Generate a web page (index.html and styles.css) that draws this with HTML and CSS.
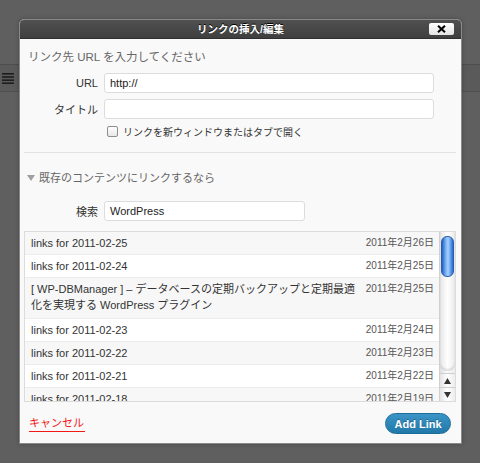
FILE: index.html
```html
<!DOCTYPE html>
<html lang="ja">
<head>
<meta charset="utf-8">
<title>リンクの挿入/編集</title>
<link rel="stylesheet" href="styles.css">
</head>
<body>
<div class="editor">
  <div class="toolbar">
    <svg class="tb-icon" width="12" height="11" viewBox="0 0 12 11"><g fill="#1e1e1e"><rect x="0" y="0" width="12" height="1.6"/><rect x="0" y="3.2" width="12" height="1.6"/><rect x="0" y="6.4" width="12" height="1.6"/><rect x="0" y="9.4" width="12" height="1.6"/></g></svg>
  </div>
</div>

<div class="dialog">
  <div class="titlebar">
    <span></span>
    <span class="title">リンクの挿入/編集</span>
    <span class="close-wrap"><button class="close" type="button"><svg width="9" height="8" viewBox="0 0 9 8"><path d="M1 0.8 L8 7.2 M8 0.8 L1 7.2" stroke="#000" stroke-width="2.1"/></svg></button></span>
  </div>
  <div class="body">
    <div class="options">
      <p class="heading">リンク先 URL を入力してください</p>
      <div class="field">
        <label class="label">URL</label>
        <div class="input url">http://</div>
      </div>
      <div class="field">
        <label class="label">タイトル</label>
        <div class="input url"></div>
      </div>
      <div class="check-row">
        <span class="checkbox"></span>
        <span class="check-text">リンクを新ウィンドウまたはタブで開く</span>
      </div>
    </div>
    <div class="sep"></div>
    <div class="internal">
      <p class="toggle"><svg class="tri" width="8" height="6" viewBox="0 0 8 6"><path d="M0 0 H8 L4 6 Z" fill="#a0a0a0"/></svg>既存のコンテンツにリンクするなら</p>
      <div class="field search-field">
        <label class="label">検索</label>
        <div class="input search">WordPress</div>
      </div>
    </div>
    <div class="results">
      <ul class="list">
        <li class="row alt"><span class="item-title">links for 2011-02-25</span><span class="item-date">2011年2月26日</span></li>
        <li class="row"><span class="item-title">links for 2011-02-24</span><span class="item-date">2011年2月25日</span></li>
        <li class="row alt wrap"><span class="item-title">[ WP-DBManager ] – データベースの定期バックアップと定期最適化を実現する WordPress プラグイン</span><span class="item-date">2011年2月25日</span></li>
        <li class="row"><span class="item-title">links for 2011-02-23</span><span class="item-date">2011年2月24日</span></li>
        <li class="row alt"><span class="item-title">links for 2011-02-22</span><span class="item-date">2011年2月23日</span></li>
        <li class="row"><span class="item-title">links for 2011-02-21</span><span class="item-date">2011年2月22日</span></li>
        <li class="row alt"><span class="item-title">links for 2011-02-18</span><span class="item-date">2011年2月19日</span></li>
      </ul>
      <div class="scrollbar">
        <div class="track"><div class="thumb"></div></div>
        <div class="arrow up"><svg width="7" height="6" viewBox="0 0 7 6"><path d="M3.5 0 L7 6 H0 Z" fill="#333"/></svg></div>
        <div class="arrow down"><svg width="7" height="6" viewBox="0 0 7 6"><path d="M0 0 H7 L3.5 6 Z" fill="#333"/></svg></div>
      </div>
    </div>
    <div class="footer">
      <a class="cancel">キャンセル</a>
      <button class="submit" type="button">Add Link</button>
    </div>
  </div>
</div>
</body>
</html>
```
FILE: styles.css
```css
html, body {
  margin: 0;
  padding: 0;
}
body {
  width: 480px;
  height: 463px;
  overflow: hidden;
  background: #5f5f5f;
  font-family: "Liberation Sans", "Noto Sans CJK JP", sans-serif;
  font-size: 11px;
  color: #333;
}
.editor {
  padding-top: 64px;
}
.toolbar {
  height: 26px;
  background: #5a5a5a;
  border-top: 1px solid #4d4d4d;
  border-bottom: 1px solid #505050;
  display: flex;
  align-items: center;
  padding-left: 2px;
}
.tb-icon {
  display: block;
}
.dialog {
  position: absolute;
  left: 19px;
  top: 19px;
  width: 441px;
  height: 423px;
  border: 1px solid #8a8a8a;
  border-radius: 5px 5px 0 0;
  background: #f9f9f9;
  box-shadow: 0 0 4px rgba(0, 0, 0, 0.25);
  overflow: hidden;
  display: flex;
  flex-direction: column;
}
.titlebar {
  height: 18px;
  flex: none;
  background: linear-gradient(#505050, #3f3f3f);
  border-bottom: 1px solid #2f2f2f;
  display: grid;
  grid-template-columns: 1fr auto 1fr;
  align-items: center;
}
.title {
  color: #fff;
  font-weight: bold;
  font-size: 10.5px;
  text-shadow: 0 -1px 0 #000;
  line-height: 18px;
}
.close-wrap {
  display: flex;
  justify-content: flex-end;
  padding-right: 7px;
}
.close {
  width: 25px;
  height: 12px;
  padding: 0;
  border: 0;
  border-radius: 2px;
  background: linear-gradient(#ffffff, #e4e4e4);
  display: flex;
  align-items: center;
  justify-content: center;
}
.close svg {
  display: block;
}
.body {
  flex: 1;
  display: flex;
  flex-direction: column;
}
.options {
  padding: 10px 0 0 8px;
}
.heading {
  margin: 0 0 8px;
  font-size: 11.5px;
  line-height: 16px;
  color: #666;
}
.field {
  display: flex;
  align-items: center;
  gap: 6px;
  margin-bottom: 6px;
}
.label {
  width: 70px;
  text-align: right;
  font-size: 11px;
  color: #333;
}
.input {
  height: 18px;
  border: 1px solid #dcdcdc;
  border-radius: 3px;
  background: #fff;
  box-sizing: content-box;
  padding: 0 5px;
  line-height: 18px;
  font-size: 11px;
  color: #222;
}
.input.url {
  width: 318px;
}
.input.search {
  width: 189px;
}
.check-row {
  display: flex;
  align-items: center;
  gap: 5px;
  margin: -2px 0 0 79px;
  height: 16px;
}
.checkbox {
  width: 9px;
  height: 9px;
  border: 1px solid #8e8e8e;
  border-radius: 2px;
  background: linear-gradient(#fff, #e8e8e8);
}
.check-text {
  font-size: 10px;
  color: #333;
}
.sep {
  margin: 13px 5px 0 4px;
  height: 1px;
  background: #e2e2e2;
}
.internal {
  padding: 17px 0 0 8px;
}
.toggle {
  margin: 0 0 15px -1px;
  line-height: 16px;
  font-size: 11px;
  color: #666;
  display: flex;
  align-items: center;
  gap: 4px;
}
.tri {
  display: block;
}
.search-field {
  margin-bottom: 0;
}
.results {
  margin: 10px 5px 0 4px;
  height: 169px;
  border: 1px solid #dcdcdc;
  background: #fff;
  display: flex;
  overflow: hidden;
}
.list {
  flex: 1;
  margin: 0;
  padding: 0;
  list-style: none;
  overflow: hidden;
}
.row {
  display: flex;
  align-items: flex-start;
  justify-content: space-between;
  padding: 3px 5px 3px 6px;
  border-bottom: 1px solid #ececec;
  line-height: 16px;
  background: #fff;
}
.row.alt {
  background: #f7f7f7;
}
.row.wrap {
  padding-bottom: 5px;
}
.item-title {
  width: 326px;
  color: #333;
  font-size: 11px;
}
.item-date {
  color: #555;
  font-size: 10px;
  white-space: nowrap;
}
.scrollbar {
  width: 15px;
  flex: none;
  display: flex;
  flex-direction: column;
  background: linear-gradient(to right, #dedede, #fafafa 45%, #ececec);
  border-left: 1px solid #d0d0d0;
}
.track {
  flex: 1;
  margin: 0 0 2px;
  border-radius: 0 0 7px 7px;
  background: linear-gradient(to right, #e6e6e6, #ffffff 50%, #ebebeb);
  box-shadow: inset 0 -2px 2px rgba(0, 0, 0, 0.12);
  padding: 4px 1px 0 1px;
}
.thumb {
  height: 41px;
  border-radius: 6px;
  background: linear-gradient(to right, #1f5fc4, #7ab3f5 35%, #a9d0fb 55%, #4a8ee8 85%, #2a68cc);
  border: 1px solid #2a5fb0;
  box-sizing: border-box;
}
.arrow {
  height: 13px;
  display: flex;
  align-items: center;
  justify-content: center;
  border-top: 1px solid #cfcfcf;
  background: linear-gradient(to right, #e4e4e4, #fff 50%, #ececec);
}
.footer {
  margin-top: 11px;
  display: flex;
  align-items: center;
  justify-content: space-between;
  padding: 0 10px 0 9px;
}
.cancel {
  color: #f31818;
  font-size: 11px;
  line-height: 14px;
  border-bottom: 1px solid #f31818;
  padding: 0 1px 1px 0;
  margin-top: 1px;
}
.submit {
  width: 66px;
  height: 21px;
  border: 1px solid #1b6d99;
  border-radius: 11px;
  background: linear-gradient(#3a94c6, #2279a9);
  color: #fff;
  font-family: "Liberation Sans", sans-serif;
  font-weight: bold;
  font-size: 11px;
  text-shadow: 0 -1px 0 rgba(0, 0, 0, 0.3);
  padding: 0;
}
```
